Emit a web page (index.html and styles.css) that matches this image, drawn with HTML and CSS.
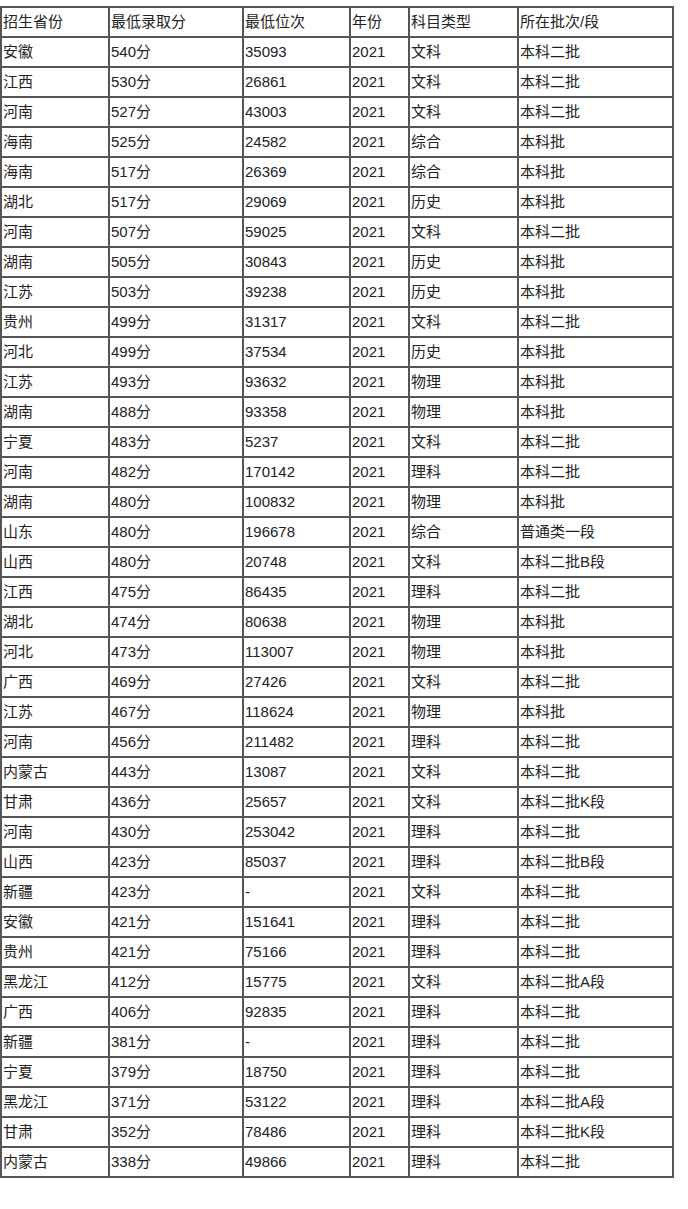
FILE: index.html
```html
<!DOCTYPE html>
<html lang="zh-CN">
<head>
<meta charset="utf-8">
<title>录取分数</title>
<link rel="stylesheet" href="styles.css">
</head>
<body>
<table class="score-table">
<thead>
<tr><td class="c1">招生省份</td><td class="c2">最低录取分</td><td class="c3">最低位次</td><td class="c4">年份</td><td class="c5">科目类型</td><td class="c6">所在批次/段</td></tr>
</thead>
<tbody>
<tr><td>安徽</td><td>540分</td><td>35093</td><td>2021</td><td>文科</td><td>本科二批</td></tr>
<tr><td>江西</td><td>530分</td><td>26861</td><td>2021</td><td>文科</td><td>本科二批</td></tr>
<tr><td>河南</td><td>527分</td><td>43003</td><td>2021</td><td>文科</td><td>本科二批</td></tr>
<tr><td>海南</td><td>525分</td><td>24582</td><td>2021</td><td>综合</td><td>本科批</td></tr>
<tr><td>海南</td><td>517分</td><td>26369</td><td>2021</td><td>综合</td><td>本科批</td></tr>
<tr><td>湖北</td><td>517分</td><td>29069</td><td>2021</td><td>历史</td><td>本科批</td></tr>
<tr><td>河南</td><td>507分</td><td>59025</td><td>2021</td><td>文科</td><td>本科二批</td></tr>
<tr><td>湖南</td><td>505分</td><td>30843</td><td>2021</td><td>历史</td><td>本科批</td></tr>
<tr><td>江苏</td><td>503分</td><td>39238</td><td>2021</td><td>历史</td><td>本科批</td></tr>
<tr><td>贵州</td><td>499分</td><td>31317</td><td>2021</td><td>文科</td><td>本科二批</td></tr>
<tr><td>河北</td><td>499分</td><td>37534</td><td>2021</td><td>历史</td><td>本科批</td></tr>
<tr><td>江苏</td><td>493分</td><td>93632</td><td>2021</td><td>物理</td><td>本科批</td></tr>
<tr><td>湖南</td><td>488分</td><td>93358</td><td>2021</td><td>物理</td><td>本科批</td></tr>
<tr><td>宁夏</td><td>483分</td><td>5237</td><td>2021</td><td>文科</td><td>本科二批</td></tr>
<tr><td>河南</td><td>482分</td><td>170142</td><td>2021</td><td>理科</td><td>本科二批</td></tr>
<tr><td>湖南</td><td>480分</td><td>100832</td><td>2021</td><td>物理</td><td>本科批</td></tr>
<tr><td>山东</td><td>480分</td><td>196678</td><td>2021</td><td>综合</td><td>普通类一段</td></tr>
<tr><td>山西</td><td>480分</td><td>20748</td><td>2021</td><td>文科</td><td>本科二批B段</td></tr>
<tr><td>江西</td><td>475分</td><td>86435</td><td>2021</td><td>理科</td><td>本科二批</td></tr>
<tr><td>湖北</td><td>474分</td><td>80638</td><td>2021</td><td>物理</td><td>本科批</td></tr>
<tr><td>河北</td><td>473分</td><td>113007</td><td>2021</td><td>物理</td><td>本科批</td></tr>
<tr><td>广西</td><td>469分</td><td>27426</td><td>2021</td><td>文科</td><td>本科二批</td></tr>
<tr><td>江苏</td><td>467分</td><td>118624</td><td>2021</td><td>物理</td><td>本科批</td></tr>
<tr><td>河南</td><td>456分</td><td>211482</td><td>2021</td><td>理科</td><td>本科二批</td></tr>
<tr><td>内蒙古</td><td>443分</td><td>13087</td><td>2021</td><td>文科</td><td>本科二批</td></tr>
<tr><td>甘肃</td><td>436分</td><td>25657</td><td>2021</td><td>文科</td><td>本科二批K段</td></tr>
<tr><td>河南</td><td>430分</td><td>253042</td><td>2021</td><td>理科</td><td>本科二批</td></tr>
<tr><td>山西</td><td>423分</td><td>85037</td><td>2021</td><td>理科</td><td>本科二批B段</td></tr>
<tr><td>新疆</td><td>423分</td><td>-</td><td>2021</td><td>文科</td><td>本科二批</td></tr>
<tr><td>安徽</td><td>421分</td><td>151641</td><td>2021</td><td>理科</td><td>本科二批</td></tr>
<tr><td>贵州</td><td>421分</td><td>75166</td><td>2021</td><td>理科</td><td>本科二批</td></tr>
<tr><td>黑龙江</td><td>412分</td><td>15775</td><td>2021</td><td>文科</td><td>本科二批A段</td></tr>
<tr><td>广西</td><td>406分</td><td>92835</td><td>2021</td><td>理科</td><td>本科二批</td></tr>
<tr><td>新疆</td><td>381分</td><td>-</td><td>2021</td><td>理科</td><td>本科二批</td></tr>
<tr><td>宁夏</td><td>379分</td><td>18750</td><td>2021</td><td>理科</td><td>本科二批</td></tr>
<tr><td>黑龙江</td><td>371分</td><td>53122</td><td>2021</td><td>理科</td><td>本科二批A段</td></tr>
<tr><td>甘肃</td><td>352分</td><td>78486</td><td>2021</td><td>理科</td><td>本科二批K段</td></tr>
<tr><td>内蒙古</td><td>338分</td><td>49866</td><td>2021</td><td>理科</td><td>本科二批</td></tr>
</tbody>
</table>
</body>
</html>
```
FILE: styles.css
```css
html, body {
  margin: 0;
  padding: 0;
  background: #fff;
}
body {
  padding-top: 6px;
  font-family: "Liberation Sans", Arial, "Noto Sans CJK SC", sans-serif;
  font-size: 15px;
  color: #222;
}
.score-table {
  width: 674px;
  table-layout: fixed;
  border-collapse: separate;
  border-spacing: 0;
  border: 1px solid #555;
}
.score-table td {
  box-sizing: border-box;
  height: 30px;
  padding: 0 0 1px 1px;
  border: 1px solid #555;
  vertical-align: middle;
  text-align: left;
  white-space: nowrap;
  overflow: hidden;
  line-height: 17px;
}
.c1 { width: 108px; }
.c2 { width: 134px; }
.c3 { width: 107px; }
.c4 { width: 59px; }
.c5 { width: 109px; }
.c6 { width: 155px; }
```
